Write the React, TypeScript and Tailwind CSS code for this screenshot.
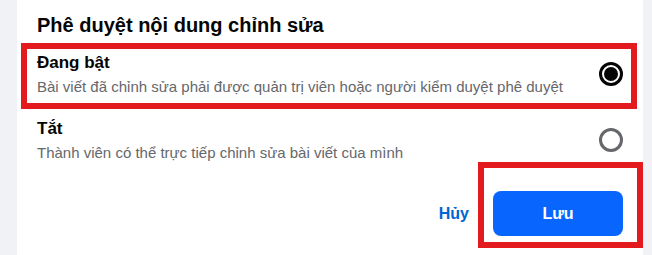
export default function App() {
  return (
    <div className="flex h-[255px] w-[652px] bg-[#f0f2f5] pl-[17px] pr-[9px] font-['Liberation_Sans',Arial,sans-serif] text-[#050505]">
      <div className="flex flex-1 flex-col bg-white pl-[4px] pr-[6px]">
        <h2 className="flex h-[43px] items-center px-[16px] pt-[6px] text-[20px] font-semibold leading-[24px]">
          Phê duyệt nội dung chỉnh sửa
        </h2>

        <div className="relative flex h-[66px] items-center justify-between pb-[4px] pl-[16px] pr-[14px]">
          <div className="flex flex-col">
            <span className="text-[17px] font-semibold leading-[22px]">Đang bật</span>
            <span className="mt-[3px] text-[15px] leading-[20px] text-[#65676b]">
              Bài viết đã chỉnh sửa phải được quản trị viên hoặc người kiểm duyệt phê duyệt
            </span>
          </div>
          <div className="flex h-[24px] w-[24px] items-center justify-center rounded-full border-[3px] border-[#050505]">
            <div className="h-[14px] w-[14px] rounded-full bg-[#050505]" />
          </div>
          <div className="pointer-events-none absolute inset-0 border-[6px] border-[#e31b1f]" />
        </div>

        <div className="flex h-[66px] items-center justify-between pb-[4px] pl-[16px] pr-[14px]">
          <div className="flex flex-col">
            <span className="text-[17px] font-semibold leading-[22px]">Tắt</span>
            <span className="mt-[3px] text-[15px] leading-[20px] text-[#65676b]">
              Thành viên có thể trực tiếp chỉnh sửa bài viết của mình
            </span>
          </div>
          <div className="h-[24px] w-[24px] rounded-full border-[3px] border-[#65676b]" />
        </div>

        <div className="flex items-center justify-end gap-[24px] pt-[16px] pr-[14px]">
          <button className="text-[16px] font-semibold text-[#0064d1]">Hủy</button>
          <div className="relative">
            <button className="h-[45px] w-[130px] rounded-[8px] bg-[#0866ff] text-[16px] font-semibold text-white">
              Lưu
            </button>
            <div className="pointer-events-none absolute -top-[29px] -right-[20px] -bottom-[12px] -left-[15px] border-[6px] border-[#e31b1f]" />
          </div>
        </div>
      </div>
    </div>
  );
}
